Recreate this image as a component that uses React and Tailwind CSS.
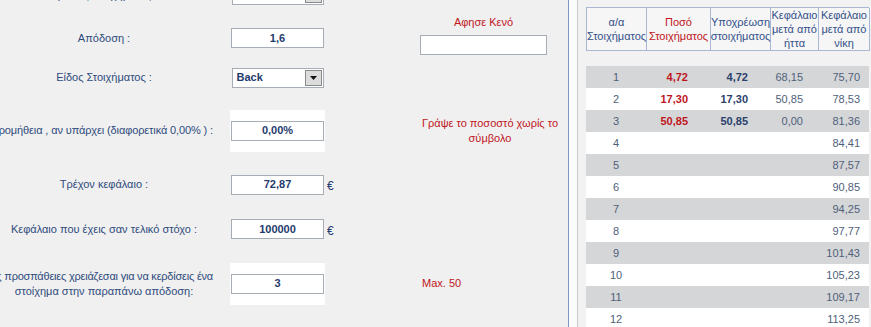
const font = { fontFamily: '"Liberation Sans", Arial, sans-serif' };

function Box({ value, align = 'center' }) {
  return (
    <div
      className={`h-[20px] w-[93px] border border-[#a7adb5] bg-white flex items-center text-[11px] font-bold text-[#1f3b6d] ${
        align === 'center' ? 'justify-center' : 'justify-start pl-[4px]'
      }`}
    >
      {value}
    </div>
  );
}

function Select({ value }) {
  return (
    <div className="h-[20px] w-[92px] border border-[#a7adb5] bg-white flex items-center text-[11px] font-bold text-[#1f3b6d]">
      <span className="flex-1 pl-[4px]">{value}</span>
      <span className="w-[17px] h-[16px] mr-[1px] bg-[#dcdcdc] border border-[#8a8a8a] flex items-center justify-center">
        <svg width="7" height="4" viewBox="0 0 7 4">
          <path d="M0 0h7L3.5 4z" fill="#111" />
        </svg>
      </span>
    </div>
  );
}

// lines given as [text, tracking] hug the right edge of the label cell
function Label({ lines }) {
  return (
    <div className="flex flex-col items-center text-[11px] leading-[15px] text-[#2e4b7c]">
      {lines.map((l) =>
        Array.isArray(l) ? (
          <div key={l[0]} className={`self-stretch flex justify-end pr-[3px] whitespace-nowrap ${l[1]}`}>{l[0]}</div>
        ) : (
          <div key={l} className="flex justify-center whitespace-nowrap">{l}</div>
        )
      )}
    </div>
  );
}

const rows = [
  { h: 40, label: ['Τρόπος Στοιχήματος :'], input: <Select value="" /> },
  {
    h: 46,
    label: ['Απόδοση :'],
    input: <Box value="1,6" />,
    note: (
      <div className="self-start mt-[-6px] w-[127px] flex flex-col items-center gap-[6px]">
        <span className="text-[11px] leading-[13px] text-[#c0151d]">Αφησε Κενό</span>
        <div className="h-[20px] w-[127px] border border-[#a7adb5] bg-white" />
      </div>
    ),
  },
  { h: 33, label: ['Είδος Στοιχήματος :'], input: <Select value="Back" /> },
  {
    h: 73,
    label: [['Προμήθεια , αν υπάρχει (διαφορετικά 0,00% ) :', 'tracking-[-0.12px]']],
    input: <Box value="0,00%" />,
    white: true,
    note: (
      <div className="w-[140px] text-center text-[11px] leading-[15px] text-[#c0151d]">
        Γράψε το ποσοστό χωρίς το σύμβολο
      </div>
    ),
  },
  { h: 35, label: ['Τρέχον κεφάλαιο :'], input: <Box value="72,87" />, euro: true },
  { h: 54, label: ['Κεφάλαιο που έχεις σαν τελικό στόχο :'], input: <Box value="100000" />, euro: true },
  {
    h: 55,
    label: [['Πόσες προσπάθειες χρειάζεσαι για να κερδίσεις ένα', 'tracking-[-0.22px]'], 'στοίχημα στην παραπάνω απόδοση:'],
    input: <Box value="3" />,
    white: true,
    note: <div className="pl-[2px] text-[11px] text-[#c0151d]">Max. 50</div>,
  },
];

const tableRows = [
  ['1', '4,72', '4,72', '68,15', '75,70'],
  ['2', '17,30', '17,30', '50,85', '78,53'],
  ['3', '50,85', '50,85', '0,00', '81,36'],
  ['4', '', '', '', '84,41'],
  ['5', '', '', '', '87,57'],
  ['6', '', '', '', '90,85'],
  ['7', '', '', '', '94,25'],
  ['8', '', '', '', '97,77'],
  ['9', '', '', '', '101,43'],
  ['10', '', '', '', '105,23'],
  ['11', '', '', '', '109,17'],
  ['12', '', '', '', '113,25'],
];

const headers = [
  ['α/α', 'Στοιχήματος'],
  ['Ποσό', 'Στοιχήματος'],
  ['Υποχρέωση', 'στοιχήματος'],
  ['Κεφάλαιο', 'μετά από', 'ήττα'],
  ['Κεφάλαιο', 'μετά από', 'νίκη'],
];

export default function App() {
  return (
    <div className="w-[871px] h-[327px] overflow-hidden flex bg-white" style={font}>
      {/* Form */}
      <div className="w-[569px] shrink-0 h-full bg-[#f0f0f0] border-r border-[#7f97c2] overflow-hidden">
        <div className="mt-[-25px] ml-[-8px] flex flex-col">
          {rows.map((r, i) => (
            <div
              key={i}
              className="grid grid-cols-[224px_14px_95px_95px_140px] items-center"
              style={{ height: r.h }}
            >
              <Label lines={r.label} />
              <div />
              <div className={`flex items-center justify-center ${r.white ? 'bg-white h-[42px]' : ''}`}>
                {r.input}
              </div>
              <div className="pl-[2px] pt-[3px] text-[12px] text-[#1f3b6d]">{r.euro ? '€' : ''}</div>
              <div className="flex">{r.note}</div>
            </div>
          ))}
        </div>
      </div>
      <div className="w-[9px] shrink-0 bg-[#fbfcfe] border-r border-[#c9c9c9]" />

      {/* Table */}
      <div className="flex-1 bg-[#f2f2f2] pl-[8px] pt-[7px] overflow-hidden">
        <div className="w-[283px] grid grid-cols-[60px_64px_60px_48px_51px] border-l border-t border-[#a9b7d2] bg-[#f6f6f6]">
          {headers.map((h, i) => (
            <div
              key={i}
              className={`h-[43px] border-r border-b border-[#a9b7d2] flex flex-col items-center justify-center text-[11px] leading-[14px] whitespace-nowrap ${
                i === 1 ? 'text-[#c0151d]' : 'text-[#34518a]'
              }`}
            >
              {h.map((t) => (
                <span key={t}>{t}</span>
              ))}
            </div>
          ))}
        </div>
        <div className="mt-[15px] w-[283px]">
          {tableRows.map((r, i) => (
            <div
              key={i}
              className={`h-[22px] grid grid-cols-[60px_64px_60px_48px_51px] items-center text-[11px] text-[#4f5f7a] ${
                i % 2 === 0 ? 'bg-[#d5d6d8]' : 'bg-white'
              }`}
            >
              <span className="text-center">{r[0]}</span>
              <span className="text-right pr-[22px] font-bold text-[#c0151d]">{r[1]}</span>
              <span className="text-right pr-[22px] font-bold text-[#2a3f6c]">{r[2]}</span>
              <span className="text-right pr-[15px]">{r[3]}</span>
              <span className="text-right pr-[9px]">{r[4]}</span>
            </div>
          ))}
        </div>
      </div>
    </div>
  );
}
